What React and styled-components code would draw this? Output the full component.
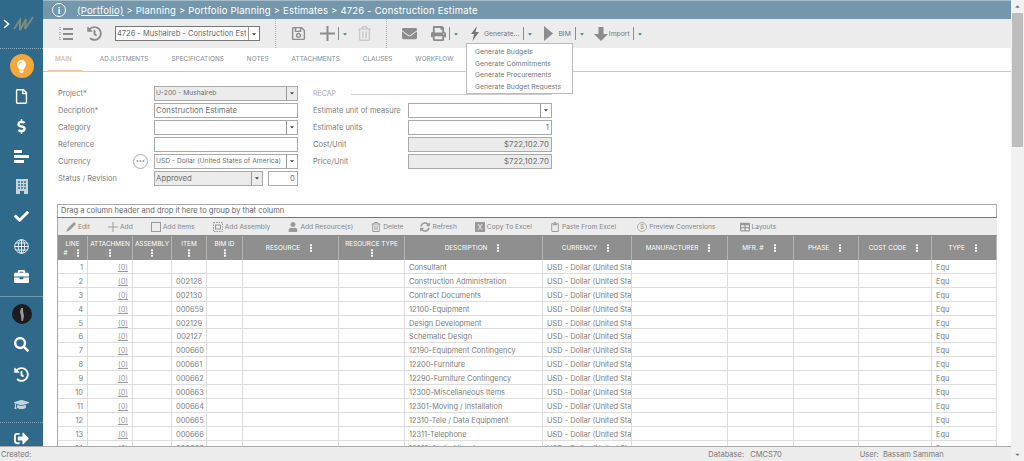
import React from "react";
import styled, { createGlobalStyle } from "styled-components";
import {
  FaBriefcase,
  FaCaretDown,
  FaCaretUp,
  FaCheck,
  FaDollarSign,
  FaEnvelope,
  FaGraduationCap,
  FaHistory,
  FaLightbulb,
  FaPrint,
  FaRegFile,
  FaRegSave,
  FaRegTrashAlt,
  FaSearch,
  FaSignOutAlt,
  FaUser,
  FaSyncAlt,
  FaRegClipboard,
  FaTable,
  FaEllipsisV
} from "react-icons/fa";

const GlobalStyle = createGlobalStyle`
  html, body {
    margin: 0;
    height: 100%;
    overflow: hidden;
    background: #fff;
  }
  body {
    font-family: Inter, "Open Sans", "Liberation Sans", sans-serif;
    color: #777;
  }
  * { box-sizing: border-box; }
`;

const Page = styled.div`
  width: 1024px;
  height: 461px;
  display: flex;
  overflow: hidden;
`;

const Shell = styled.div`
  width: 1011px;
  height: 461px;
  display: flex;
  flex-direction: column;
`;

const Upper = styled.div`
  flex: 1;
  min-height: 0;
  display: flex;
`;

const Sidebar = styled.nav`
  width: 43px;
  background: #2f6a8b;
  color: #fff;
  display: flex;
  flex-direction: column;
  align-items: center;
`;

const LogoBlock = styled.div`
  width: 100%;
  height: 49px;
  flex: none;
  display: flex;
  align-items: center;
  gap: 3px;
  padding: 0 0 0 3px;
  border-bottom: 1px dotted #8fb0c4;
`;

const SideItem = styled.div`
  width: 100%;
  height: 30px;
  flex: none;
  display: flex;
  align-items: center;
  justify-content: center;
  font-size: ${p => p.$size || 15}px;
  color: ${p => p.$dim ? "#c4d4de" : "#fff"};
`;

const SideGroup = styled.div`
  width: 100%;
  flex: none;
  padding-top: 2px;
  border-bottom: 1px ${p => p.$dotted ? "dotted #7fa3b8" : "solid #6f97ae"};
  height: ${p => p.$height}px;
`;

const BulbCircle = styled.span`
  width: 24px;
  height: 24px;
  border-radius: 50%;
  background: #f5a83a;
  display: flex;
  align-items: center;
  justify-content: center;
  font-size: 13px;
  color: #fff;
`;

const Main = styled.main`
  flex: 1;
  min-width: 0;
  display: flex;
  flex-direction: column;
`;

const Breadcrumb = styled.header`
  height: 19px;
  flex: none;
  background: #7497ac;
  border-top: 1px solid #a5bcca;
  color: #fff;
  display: flex;
  align-items: center;
  padding-left: 9px;
  font-size: 9.5px;
  letter-spacing: 0.2px;
  white-space: pre;
`;

const InfoBadge = styled.span`
  width: 14px;
  height: 14px;
  border: 1.5px solid #fff;
  border-radius: 50%;
  display: flex;
  align-items: center;
  justify-content: center;
  font-size: 9px;
  font-weight: 700;
  margin-right: 11px;
`;

const Underlined = styled.span`
  text-decoration: underline;
`;

const Toolbar = styled.div`
  position: relative;
  height: 29px;
  flex: none;
  background: #ececec;
  display: flex;
  align-items: center;
  padding-left: 15px;
  color: #8c8c8c;
`;

const ToolIcon = styled.span`
  display: flex;
  align-items: center;
  justify-content: center;
  flex: none;
  width: ${p => p.$width || 15}px;
  margin-left: ${p => p.$left || 0}px;
  font-size: ${p => p.$size || 15}px;
  color: ${p => p.$light ? "#c8c8c8" : "#8c8c8c"};
`;

const ToolText = styled.span`
  font-size: 6.8px;
  margin-left: ${p => p.$left || 4}px;
  color: #777;
  white-space: nowrap;
`;

const Caret = styled.span`
  display: flex;
  align-items: center;
  height: 13px;
  margin-left: ${p => p.$left || 4}px;
  padding-left: 3px;
  border-left: 1px solid #8c8c8c;
  font-size: 6px;
  color: #3f7896;
`;

const ToolDivider = styled.span`
  width: 1px;
  height: 29px;
  margin: 0 15px;
  border-left: 1px dotted #b5b5b5;
`;

const RecordSelect = styled.div`
  width: 145px;
  height: 15px;
  margin-left: 13px;
  background: #fff;
  border: 1px solid #777;
  display: flex;
  align-items: center;
  font-size: 7.5px;
  color: #666;
  padding-left: 1px;
  white-space: nowrap;
  overflow: hidden;
`;

const SelectValue = styled.span`
  flex: 1;
  min-width: 0;
  overflow: hidden;
`;

const SelectArrow = styled.span`
  width: 11px;
  height: 100%;
  flex: none;
  border-left: 1px solid #999;
  display: flex;
  align-items: center;
  justify-content: center;
  font-size: 6px;
  color: #444;
`;

const Menu = styled.div`
  position: absolute;
  left: 423px;
  top: 24px;
  width: 107px;
  height: 51px;
  background: #fff;
  border: 1px solid #bbb;
  padding: 2px 0 0 8px;
  z-index: 2;
`;

const MenuItem = styled.div`
  height: 11.5px;
  line-height: 11.5px;
  font-size: 6.8px;
  color: #777;
  white-space: nowrap;
`;

const Tabs = styled.div`
  height: 24px;
  flex: none;
  display: flex;
  padding-left: 5px;
  border-bottom: 1px solid #c9c9c9;
`;

const Tab = styled.div`
  height: 24px;
  padding: 7px ${p => p.$active ? "11px" : "0"} 0 ${p => p.$active ? "7px" : "0"};
  margin-right: ${p => p.$active ? 17 : 23}px;
  font-size: 6.4px;
  line-height: 9px;
  letter-spacing: 0.03px;
  color: ${p => p.$active ? "#d2a67c" : "#7f8b92"};
  border-bottom: ${p => p.$active ? "2px solid #edcfae" : "none"};
`;

const FormArea = styled.section`
  height: 132px;
  flex: none;
  display: flex;
  padding: 14px 0 0 15px;
  font-size: 7.5px;
`;

const FormColumn = styled.div`
  width: ${p => p.$width}px;
  flex: none;
  margin-left: ${p => p.$left || 0}px;
  display: flex;
  flex-direction: column;
  gap: 3px;
`;

const FormRow = styled.div`
  height: 14px;
  display: flex;
  align-items: center;
`;

const Label = styled.div`
  width: ${p => p.$width}px;
  flex: none;
  display: flex;
  align-items: center;
  justify-content: space-between;
  color: #808080;
  padding-right: 6px;
`;

const Field = styled.div`
  flex: ${p => p.$width ? "none" : 1};
  width: ${p => p.$width ? `${p.$width}px` : "auto"};
  margin-left: ${p => p.$left || 0}px;
  min-width: 0;
  height: 15px;
  border: 1px solid #aaa;
  background: ${p => p.$grey ? "#ebebeb" : "#fff"};
  display: flex;
  align-items: center;
  justify-content: ${p => p.$right ? "flex-end" : "flex-start"};
  padding-left: 1px;
  color: #707070;
  font-size: ${p => p.$small ? 6.7 : 7.8}px;
  white-space: nowrap;
  overflow: hidden;
`;

const DotsButton = styled.span`
  width: 15px;
  height: 15px;
  border: 1px solid #aaa;
  border-radius: 50%;
  display: flex;
  align-items: center;
  justify-content: center;
  font-size: 6px;
  font-weight: 700;
  letter-spacing: 0.2px;
  line-height: 1;
  color: #888;
`;

const RecapTitle = styled.div`
  height: 14px;
  display: flex;
  align-items: center;
  font-size: 7px;
  color: #aaa;
  gap: 15px;
  &::after {
    content: "";
    flex: 1;
    margin-top: 3px;
    border-top: 1px solid #ccc;
  }
`;

const GridWrap = styled.section`
  margin-left: 14px;
  width: 940px;
  height: 242px;
  flex: none;
  border-left: 1px solid #aaa;
  overflow: hidden;
`;

const GroupBar = styled.div`
  height: 14px;
  border: 1px solid #aaa;
  border-left: none;
  border-bottom-color: #777;
  font-size: 7.5px;
  line-height: 12px;
  padding-left: 3px;
  color: #666;
`;

const GridTools = styled.div`
  height: 18px;
  background: #ececec;
  display: flex;
  align-items: center;
  padding-left: 8px;
  font-size: 6.7px;
  color: #888;
  border-bottom: 1px solid #8c8c8c;
`;

const GridTool = styled.span`
  display: flex;
  align-items: center;
  gap: 2px;
  margin-right: ${p => p.$gap || 18}px;
  white-space: nowrap;
  svg {
    width: 10px;
    height: 10px;
    flex: none;
    color: #999;
  }
`;

const columns = "30px 45px 39px 35px 36px 96px 66px 138px 89px 96px 66px 65px 73px 65px";

const HeaderRow = styled.div`
  display: grid;
  grid-template-columns: ${columns};
  height: 24px;
  background: #8f8f8f;
  color: #fff;
  font-size: 6.4px;
`;

const HeaderCell = styled.div`
  display: flex;
  flex-direction: ${p => p.$stack ? "column" : "row"};
  align-items: center;
  justify-content: center;
  gap: ${p => p.$stack ? 1 : 7}px;
  border-right: 1px solid #b5b5b5;
  text-align: center;
  white-space: nowrap;
  overflow: hidden;
  svg {
    font-size: 8px;
    flex: none;
  }
`;

const HeaderInline = styled.span`
  display: flex;
  align-items: center;
  gap: 6px;
`;

const Row = styled.div`
  display: grid;
  grid-template-columns: ${columns};
  height: 13.9px;
  border-bottom: 1px solid #ddd;
  font-size: 7.4px;
  color: #7d7d7d;
  line-height: 15px;
`;

const Cell = styled.div`
  border-right: 1px solid #ddd;
  padding: 0 4px;
  text-align: ${p => p.$align || "left"};
  white-space: nowrap;
  overflow: hidden;
`;

const AttachLink = styled.span`
  text-decoration: underline;
  color: #999;
`;

const StatusBar = styled.footer`
  height: 15px;
  flex: none;
  position: relative;
  z-index: 1;
  background: #ececec;
  border-top: 1px solid #aaa;
  display: flex;
  align-items: center;
  padding-left: 1px;
  font-size: 7.5px;
  color: #777;
`;

const StatusSpacer = styled.span`
  margin-left: ${p => p.$left}px;
  white-space: pre;
`;

const Scrollbar = styled.div`
  width: 13px;
  height: 461px;
  flex: none;
  display: flex;
  flex-direction: column;
  background: #f1f1f1;
`;

const ScrollButton = styled.div`
  height: 13px;
  flex: none;
  display: flex;
  align-items: center;
  justify-content: center;
  font-size: 7px;
  color: #777;
  margin-top: ${p => p.$push ? "auto" : 0};
`;

const ScrollThumb = styled.div`
  height: 134px;
  margin: 0 1px;
  background: #bdbdbd;
`;

const Logo = () => (
  <svg width="21" height="17" viewBox="0 0 21 17">
    <path
      d="M1 13 L7 4 L7 14 L13 3 L12 13 L20 1"
      fill="none"
      stroke="#7d8a80"
      strokeWidth="2"
    />
  </svg>
);

const Chevron = () => (
  <svg width="7" height="10" viewBox="0 0 7 10">
    <path d="M1 1 L5.5 5 L1 9" fill="none" stroke="#fff" strokeWidth="1.5" />
  </svg>
);

const Bars = () => (
  <svg width="15" height="13" viewBox="0 0 15 13">
    <path d="M0 0h8v3H0zM0 5h15v3H0zM0 10h10v3H0z" fill="#fff" />
  </svg>
);

const Building = () => (
  <svg width="12" height="15" viewBox="0 0 12 15">
    <path d="M0 0h12v15H0z" fill="#c4d4de" />
    <path
      d="M2 2h2v2H2zM5 2h2v2H5zM8 2h2v2H8zM2 5h2v2H2zM5 5h2v2H5zM8 5h2v2H8zM2 8h2v2H2zM5 8h2v2H5zM8 8h2v2H8z"
      fill="#5d8aa3"
    />
    <path d="M4 12h4v3H4z" fill="#2f6a8b" />
  </svg>
);

const Globe = () => (
  <svg width="15" height="15" viewBox="0 0 15 15" fill="none" stroke="#e4ecf1" strokeWidth="1">
    <circle cx="7.5" cy="7.5" r="6.8" />
    <ellipse cx="7.5" cy="7.5" rx="3.2" ry="6.8" />
    <path d="M7.5 .7v13.6M.7 7.5h13.6M1.8 4h11.4M1.8 11h11.4" />
  </svg>
);

const Avatar = () => (
  <svg width="20" height="20" viewBox="0 0 20 20">
    <circle cx="10" cy="10" r="10" fill="#1c1c20" />
    <path d="M9 4h2v3l1 5-1 5H9.5L9 12 8 8z" fill="#9a9a9a" />
  </svg>
);

const ListIcon = () => (
  <svg width="15" height="14" viewBox="0 0 15 14" fill="#8c8c8c">
    <path d="M5 1h10v2H5zM5 6h10v2H5zM5 11h10v2H5z" />
    <path d="M1 0h2v1H1zM1 2h2v1H1zM1 5h2v1H1zM1 7h2v1H1zM1 10h2v1H1zM1 12h2v1H1z" fill="#b0b0b0" />
  </svg>
);

const PlusIcon = () => (
  <svg width="15" height="15" viewBox="0 0 15 15">
    <path d="M6.5 0h2v6.5H15v2H8.5V15h-2V8.5H0v-2h6.5z" fill="#8c8c8c" />
  </svg>
);

const BoltIcon = () => (
  <svg width="10" height="15" viewBox="0 0 10 15">
    <path d="M7 0L1 8h3L2.5 15 9 6H5.5z" fill="#777" />
  </svg>
);

const TriangleIcon = () => (
  <svg width="9" height="15" viewBox="0 0 9 15">
    <path d="M0 0l9 7.5L0 15z" fill="#8c8c8c" />
  </svg>
);

const DownArrowIcon = () => (
  <svg width="14" height="14" viewBox="0 0 14 14">
    <path d="M4.5 0h5v7H14l-7 7-7-7h4.5z" fill="#8c8c8c" />
  </svg>
);

const PenIcon = () => (
  <svg viewBox="0 0 10 10">
    <path d="M8 0l2 2-6 6-4 2 2-4z" fill="currentColor" />
  </svg>
);

const ThinPlusIcon = () => (
  <svg viewBox="0 0 10 10">
    <path d="M4.5 0h1v4.5H10v1H5.5V10h-1V5.5H0v-1h4.5z" fill="currentColor" />
  </svg>
);

const SquareIcon = () => (
  <svg viewBox="0 0 10 10">
    <rect x=".5" y=".5" width="9" height="9" fill="none" stroke="currentColor" />
  </svg>
);

const AssemblyIcon = () => (
  <svg viewBox="0 0 10 10" fill="none" stroke="currentColor">
    <rect x=".5" y=".5" width="9" height="9" strokeDasharray="1.5 1" />
    <rect x="2.5" y="3" width="5" height="4" />
  </svg>
);

const ExcelIcon = () => (
  <svg viewBox="0 0 10 10">
    <rect width="10" height="10" fill="#999" />
    <text x="5" y="7.8" fontSize="8" textAnchor="middle" fill="#ececec">X</text>
  </svg>
);

const CoinIcon = () => (
  <svg viewBox="0 0 10 10">
    <circle cx="5" cy="5" r="4.5" fill="none" stroke="currentColor" strokeWidth=".7" />
    <text x="5" y="7.3" fontSize="6.5" textAnchor="middle" fill="currentColor">$</text>
  </svg>
);

const tools = [
  [PenIcon, "Edit"],
  [ThinPlusIcon, "Add"],
  [SquareIcon, "Add Items"],
  [AssemblyIcon, "Add Assembly"],
  [FaUser, "Add Resource(s)"],
  [FaRegTrashAlt, "Delete", 17],
  [FaSyncAlt, "Refresh"],
  [ExcelIcon, "Copy To Excel"],
  [FaRegClipboard, "Paste From Excel", 21],
  [CoinIcon, "Preview Conversions", 24],
  [FaTable, "Layouts"]
];

const headers = [
  ["ATTACHMEN", true],
  ["ASSEMBLY", true],
  ["ITEM", true],
  ["BIM ID", true],
  ["RESOURCE"],
  ["RESOURCE TYPE", true],
  ["DESCRIPTION"],
  ["CURRENCY"],
  ["MANUFACTURER"],
  ["MFR. #"],
  ["PHASE"],
  ["COST CODE"],
  ["TYPE"]
];

const rows = [
  ["", "Consultant"],
  ["002128", "Construction Administration"],
  ["002130", "Contract Documents"],
  ["000659", "12100-Equipment"],
  ["002129", "Design Development"],
  ["002127", "Schematic Design"],
  ["000660", "12190-Equipment Contingency"],
  ["000661", "12200-Furniture"],
  ["000662", "12290-Furniture Contingency"],
  ["000663", "12300-Miscellaneous Items"],
  ["000664", "12301-Moving / Installation"],
  ["000665", "12310-Tele / Data Equipment"],
  ["000666", "12311-Telephone"],
  ["000667", "12312-Audio Visual"]
];

const tabNames = [
  "ADJUSTMENTS",
  "SPECIFICATIONS",
  "NOTES",
  "ATTACHMENTS",
  "CLAUSES",
  "WORKFLOW"
];

const menuItems = [
  "Generate Budgets",
  "Generate Commitments",
  "Generate Procurements",
  "Generate Budget Requests"
];

export default function App() {
  return (
    <Page>
      <GlobalStyle />
      <Shell>
        <Upper>
          <Sidebar>
            <LogoBlock>
              <Chevron />
              <Logo />
            </LogoBlock>
            <SideGroup $height={248}>
              <SideItem><BulbCircle><FaLightbulb /></BulbCircle></SideItem>
              <SideItem><FaRegFile /></SideItem>
              <SideItem><FaDollarSign /></SideItem>
              <SideItem><Bars /></SideItem>
              <SideItem><Building /></SideItem>
              <SideItem><FaCheck /></SideItem>
              <SideItem><Globe /></SideItem>
              <SideItem><FaBriefcase /></SideItem>
            </SideGroup>
            <SideGroup $height={126} $dotted>
              <SideItem><Avatar /></SideItem>
              <SideItem><FaSearch /></SideItem>
              <SideItem><FaHistory /></SideItem>
              <SideItem $dim><FaGraduationCap /></SideItem>
            </SideGroup>
            <SideItem><FaSignOutAlt /></SideItem>
          </Sidebar>
          <Main>
            <Breadcrumb>
              <InfoBadge>i</InfoBadge>
              <Underlined>(Portfolio)</Underlined>
              {" > Planning > Portfolio Planning > Estimates > 4726 - Construction Estimate"}
            </Breadcrumb>
            <Toolbar>
              <ToolIcon><ListIcon /></ToolIcon>
              <ToolIcon $left={14}><FaHistory /></ToolIcon>
              <RecordSelect>
                <SelectValue>4726 - Mushaireb - Construction Est</SelectValue>
                <SelectArrow><FaCaretDown /></SelectArrow>
              </RecordSelect>
              <ToolDivider />
              <ToolIcon><FaRegSave /></ToolIcon>
              <ToolIcon $left={14}><PlusIcon /></ToolIcon>
              <Caret $left={3}><FaCaretDown /></Caret>
              <ToolIcon $left={10} $width={13} $light><FaRegTrashAlt /></ToolIcon>
              <ToolDivider />
              <ToolIcon><FaEnvelope /></ToolIcon>
              <ToolIcon $left={14}><FaPrint /></ToolIcon>
              <Caret $left={3}><FaCaretDown /></Caret>
              <ToolIcon $left={11} $width={10}><BoltIcon /></ToolIcon>
              <ToolText>Generate...</ToolText>
              <Caret><FaCaretDown /></Caret>
              <ToolIcon $left={11} $width={9}><TriangleIcon /></ToolIcon>
              <ToolText $left={5}>BIM</ToolText>
              <Caret><FaCaretDown /></Caret>
              <ToolIcon $left={9} $width={14}><DownArrowIcon /></ToolIcon>
              <ToolText $left={1}>Import</ToolText>
              <Caret $left={3}><FaCaretDown /></Caret>
              <Menu>
                {menuItems.map(item => (
                  <MenuItem key={item}>{item}</MenuItem>
                ))}
              </Menu>
            </Toolbar>
            <Tabs>
              <Tab $active>MAIN</Tab>
              {tabNames.map(name => (
                <Tab key={name}>{name}</Tab>
              ))}
            </Tabs>
            <FormArea>
              <FormColumn $width={240}>
                <FormRow>
                  <Label $width={96}>Project*</Label>
                  <Field $grey $small>
                    <SelectValue>U-200 - Mushaireb</SelectValue>
                    <SelectArrow><FaCaretDown /></SelectArrow>
                  </Field>
                </FormRow>
                <FormRow>
                  <Label $width={96}>Decription*</Label>
                  <Field>Construction Estimate</Field>
                </FormRow>
                <FormRow>
                  <Label $width={96}>Category</Label>
                  <Field>
                    <SelectValue />
                    <SelectArrow><FaCaretDown /></SelectArrow>
                  </Field>
                </FormRow>
                <FormRow>
                  <Label $width={96}>Reference</Label>
                  <Field />
                </FormRow>
                <FormRow>
                  <Label $width={96}>
                    Currency
                    <DotsButton>•••</DotsButton>
                  </Label>
                  <Field $small>
                    <SelectValue>USD - Dollar (United States of America)</SelectValue>
                    <SelectArrow><FaCaretDown /></SelectArrow>
                  </Field>
                </FormRow>
                <FormRow>
                  <Label $width={96}>Status / Revision</Label>
                  <Field $grey $width={109}>
                    <SelectValue>Approved</SelectValue>
                    <SelectArrow><FaCaretDown /></SelectArrow>
                  </Field>
                  <Field $right $width={30} $left={5}>0&nbsp;</Field>
                </FormRow>
              </FormColumn>
              <FormColumn $width={239} $left={15}>
                <RecapTitle>RECAP</RecapTitle>
                <FormRow>
                  <Label $width={95}>Estimate unit of measure</Label>
                  <Field>
                    <SelectValue />
                    <SelectArrow><FaCaretDown /></SelectArrow>
                  </Field>
                </FormRow>
                <FormRow>
                  <Label $width={95}>Estimate units</Label>
                  <Field $right>1&nbsp;</Field>
                </FormRow>
                <FormRow>
                  <Label $width={95}>Cost/Unit</Label>
                  <Field $grey $right>$722,102.70&nbsp;</Field>
                </FormRow>
                <FormRow>
                  <Label $width={95}>Price/Unit</Label>
                  <Field $grey $right>$722,102.70&nbsp;</Field>
                </FormRow>
              </FormColumn>
            </FormArea>
            <GridWrap>
              <GroupBar>Drag a column header and drop it here to group by that column</GroupBar>
              <GridTools>
                {tools.map(([Icon, label, gap]) => (
                  <GridTool key={label} $gap={gap}>
                    <Icon />
                    {label}
                  </GridTool>
                ))}
              </GridTools>
              <HeaderRow>
                <HeaderCell $stack>
                  LINE
                  <HeaderInline>
                    #
                    <FaEllipsisV />
                  </HeaderInline>
                </HeaderCell>
                {headers.map(([label, stack]) => (
                  <HeaderCell key={label} $stack={stack}>
                    {label}
                    <FaEllipsisV />
                  </HeaderCell>
                ))}
              </HeaderRow>
              {rows.map(([item, description], index) => (
                <Row key={description}>
                  <Cell $align="right">{index + 1}</Cell>
                  <Cell $align="right"><AttachLink>(0)</AttachLink></Cell>
                  <Cell />
                  <Cell $align="right">{item}</Cell>
                  <Cell />
                  <Cell />
                  <Cell />
                  <Cell>{description}</Cell>
                  <Cell>USD - Dollar (United States of America)</Cell>
                  <Cell />
                  <Cell />
                  <Cell />
                  <Cell />
                  <Cell>Equ</Cell>
                </Row>
              ))}
            </GridWrap>
          </Main>
        </Upper>
        <StatusBar>
          Created:
          <StatusSpacer $left={677}>{"Database:   CMCS70"}</StatusSpacer>
          <StatusSpacer $left={78}>{"User:  Bassam Samman"}</StatusSpacer>
        </StatusBar>
      </Shell>
      <Scrollbar>
        <ScrollButton><FaCaretUp /></ScrollButton>
        <ScrollThumb />
        <ScrollButton $push><FaCaretDown /></ScrollButton>
      </Scrollbar>
    </Page>
  );
}
